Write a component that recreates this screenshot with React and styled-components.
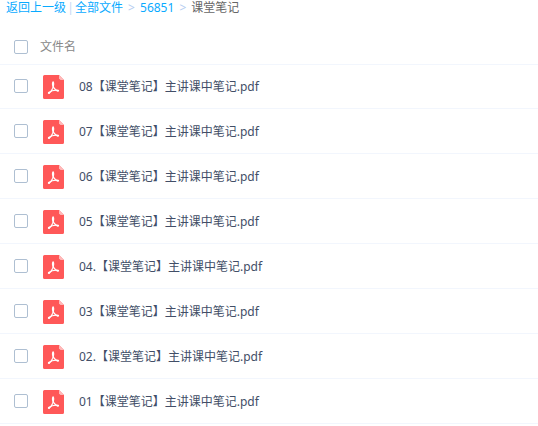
import React, { useState } from 'react';
import styled, { createGlobalStyle } from 'styled-components';

const GlobalStyle = createGlobalStyle`
  body {
    margin: 0;
    background: #fff;
    color: #424e67;
    font-family: "Noto Sans", "Noto Sans CJK SC", sans-serif;
    font-size: 12px;
    line-height: 16px;
  }
`;

// 面包屑导航
const Breadcrumb = styled.nav`
  display: flex;
  align-items: center;
  padding: 0 6px;
  color: #666;
`;

const Crumb = styled.a`
  color: #09aaff;
  text-decoration: none;

  &:hover {
    text-decoration: underline;
  }
`;

const Divider = styled.span`
  width: 9px;
  text-align: center;
  color: #c4d8f4;
`;

const Arrow = styled(Divider)`
  width: 17px;
  color: #b4ccf0;
`;

// 文件列表
const FileTable = styled.table`
  width: 100%;
  margin-top: 12px;
  border-collapse: separate;
  border-spacing: 0;
`;

const HeadCell = styled.th`
  padding: 11px 0 9px;
  border-bottom: 1px solid #f2f6fd;
  color: #888;
  font-weight: normal;
  text-align: left;
`;

const Cell = styled.td`
  padding: 9px 0;
  border-bottom: 1px solid #f2f6fd;

  tr:first-child > & {
    padding-top: 8px;
  }
`;

const Line = styled.div`
  display: flex;
  align-items: center;
  padding-left: 14px;
`;

const Checkbox = styled.input`
  appearance: none;
  box-sizing: border-box;
  flex: none;
  width: 14px;
  height: 14px;
  margin: 0;
  border: 1px solid #aebfd2;
  border-radius: 2px;
  background: #fff;
  cursor: pointer;

  &:checked {
    background: #09aaff;
    border-color: #09aaff;
  }
`;

const HeadLabel = styled.label`
  margin-left: 12px;
`;

const FileLabel = styled.label`
  display: flex;
  align-items: center;
  gap: 15px;
  margin-left: 15px;
  padding-top: 2px;
  cursor: pointer;
`;

const Icon = styled.svg`
  display: block;
  flex: none;
  width: 21px;
  height: 24px;
`;

const PdfIcon = () => (
  <Icon viewBox="0 0 21 24" aria-hidden="true">
    <path d="M1.5 0H16L21 5V22.5a1.5 1.5 0 0 1-1.5 1.5H1.5a1.5 1.5 0 0 1-1.5-1.5V1.5A1.5 1.5 0 0 1 1.5 0z" fill="#ff5858" />
    <path d="M16 0L21 5H17.5L16 3.5z" fill="#ffb9b9" />
    <g fill="none" stroke="#fff" strokeWidth="1.2" strokeLinecap="round" strokeLinejoin="round">
      <path d="M9.9 7C9.2 8.6 9.6 11 10.9 12.8C12.1 14.4 13.4 15.6 14.8 16" />
      <path d="M10.3 7C11 8.6 10.6 11 9.6 13.4C8.7 15.4 7.6 17.2 6 18.3" />
      <path d="M5.6 17.6C8 15.9 11.6 14.8 15 15.3" />
    </g>
    <ellipse cx="5.9" cy="17.9" rx="1.1" ry="0.9" fill="#fff" />
    <ellipse cx="15" cy="15.7" rx="1.1" ry="0.9" fill="#fff" />
  </Icon>
);

const files = [
  '08【课堂笔记】主讲课中笔记.pdf',
  '07【课堂笔记】主讲课中笔记.pdf',
  '06【课堂笔记】主讲课中笔记.pdf',
  '05【课堂笔记】主讲课中笔记.pdf',
  '04.【课堂笔记】主讲课中笔记.pdf',
  '03【课堂笔记】主讲课中笔记.pdf',
  '02.【课堂笔记】主讲课中笔记.pdf',
  '01【课堂笔记】主讲课中笔记.pdf',
];

const App = () => {
  const [selected, setSelected] = useState([]);

  const toggle = (name) =>
    setSelected(
      selected.includes(name)
        ? selected.filter((item) => item !== name)
        : [...selected, name],
    );

  const toggleAll = () =>
    setSelected(selected.length === files.length ? [] : files);

  return (
    <>
      <GlobalStyle />
      <Breadcrumb>
        <Crumb href="#back">返回上一级</Crumb>
        <Divider>|</Divider>
        <Crumb href="#all">全部文件</Crumb>
        <Arrow>&gt;</Arrow>
        <Crumb href="#56851">56851</Crumb>
        <Arrow>&gt;</Arrow>
        <span>课堂笔记</span>
      </Breadcrumb>
      <FileTable>
        <thead>
          <tr>
            <HeadCell scope="col">
              <Line>
                <Checkbox
                  type="checkbox"
                  id="check-all"
                  checked={selected.length === files.length}
                  onChange={toggleAll}
                />
                <HeadLabel htmlFor="check-all">文件名</HeadLabel>
              </Line>
            </HeadCell>
          </tr>
        </thead>
        <tbody>
          {files.map((name, index) => (
            <tr key={name}>
              <Cell>
                <Line>
                  <Checkbox
                    type="checkbox"
                    id={`file-${index}`}
                    checked={selected.includes(name)}
                    onChange={() => toggle(name)}
                  />
                  <FileLabel htmlFor={`file-${index}`}>
                    <PdfIcon />
                    {name}
                  </FileLabel>
                </Line>
              </Cell>
            </tr>
          ))}
        </tbody>
      </FileTable>
    </>
  );
};

export default App;
